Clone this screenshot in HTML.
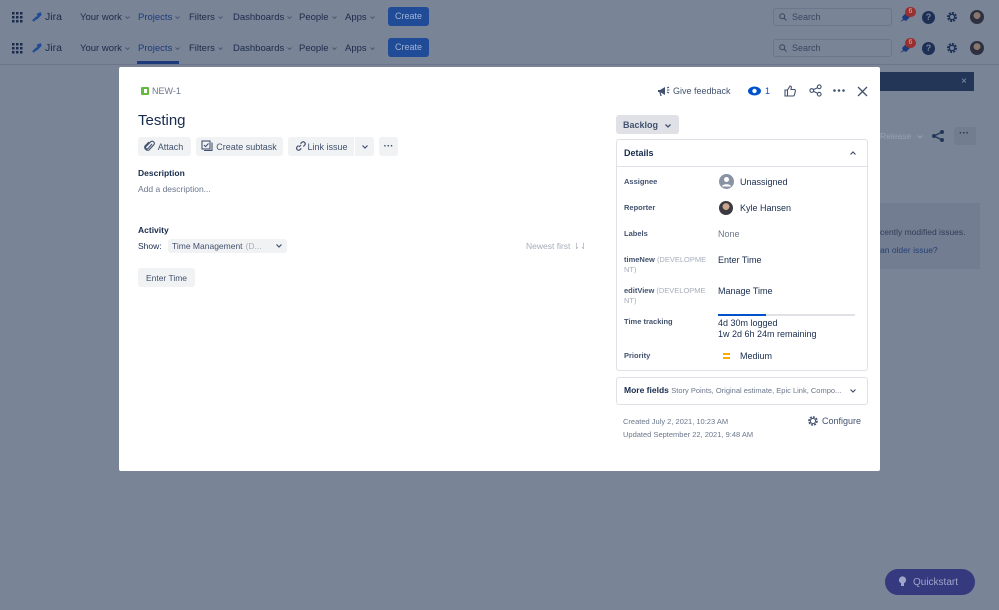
<!DOCTYPE html>
<html><head><meta charset="utf-8">
<style>
*{box-sizing:border-box;margin:0;padding:0}
body{width:999px;height:610px;overflow:hidden;background:#7a8497;font-family:"Liberation Sans",sans-serif;position:relative;color:#172b4d}
.a{position:absolute;white-space:nowrap}
.nav{font-size:9.5px;color:#1b2a4a}
.btn{position:absolute;background:#f1f2f4;border-radius:3px;font-size:9px;color:#42526e;display:flex;align-items:center;justify-content:center}
.lab{font-size:7.5px;color:#42526e;font-weight:bold}
.val{font-size:9px;color:#172b4d}
.gr{color:#a5adba;font-weight:normal}
.cv{display:inline-block;vertical-align:middle;margin-left:3px}
</style></head><body>

<div class="a" style="left:0;top:64px;width:999px;height:1px;background:#6d7689"></div>
<div id="rows"></div>
<div class="a" style="left:137px;top:61px;width:42px;height:3px;background:#1d3b7a"></div>

<!-- background board bits -->
<div class="a" style="left:875px;top:72px;width:99px;height:19px;background:#243657"></div>
<div class="a" style="left:961px;top:76px;color:#8b96ab;font-size:10px">×</div>
<div class="a" style="left:880px;top:131px;font-size:8.5px;color:#98a1b3">Release <svg class="cv" width="6" height="4" viewBox="0 0 6 4"><path d="M.5.5L3 3 5.5.5" stroke="#98a1b3" fill="none"/></svg></div>
<div class="a" style="left:954px;top:127px;width:22px;height:18px;background:#737d90;border-radius:3px"></div>
<div class="a" style="left:959px;top:128px;color:#243657;font-size:10px;font-weight:bold">···</div>
<svg class="a" style="left:931px;top:129px" width="14" height="14" viewBox="0 0 14 14"><circle cx="11" cy="3" r="2" fill="#243657"/><circle cx="3" cy="7" r="2" fill="#243657"/><circle cx="11" cy="11" r="2" fill="#243657"/><path d="M11 3L3 7L11 11" stroke="#243657" fill="none" stroke-width="1.3"/></svg>
<div class="a" style="left:880px;top:203px;width:100px;height:66px;background:#737d91"></div>
<div class="a" style="left:880px;top:227px;font-size:8.5px;color:#303d57">cently modified issues.</div>
<div class="a" style="left:880px;top:245px;font-size:8.5px;color:#253f73">an older issue?</div>

<!-- quickstart -->
<div class="a" style="left:885px;top:569px;width:90px;height:26px;border-radius:13px;background:#35397e;color:#9fa6c9;font-size:10px;display:flex;align-items:center;padding-left:28px">Quickstart</div>
<svg class="a" style="left:898px;top:576px" width="9" height="12" viewBox="0 0 9 12"><circle cx="4.5" cy="4" r="3.6" fill="#9fa6c9"/><rect x="3" y="7" width="3" height="3" fill="#9fa6c9"/></svg>

<!-- modal -->
<div class="a" style="left:119px;top:67px;width:761px;height:404px;background:#fff;border-radius:2px"></div>

<div class="a" style="left:141px;top:87px;width:8px;height:8px;background:#63ba3c;border-radius:1px"></div>
<div class="a" style="left:143.5px;top:89px;width:3px;height:4px;background:#fff"></div>
<div class="a" style="left:152px;top:86px;font-size:9px;color:#6b778c">NEW-1</div>
<div class="a" style="left:138px;top:112px;font-size:15px;color:#172b4d">Testing</div>

<div class="btn" style="left:138px;top:137px;width:53px;height:19px;padding-left:12px">Attach</div>
<svg class="a" style="left:144px;top:140px" width="11" height="12" viewBox="0 0 11 12"><path d="M8 4L4 8.5a1.3 1.3 0 0 1-2-2L7 1.5a2.2 2.2 0 0 1 3 3L5 10a3 3 0 0 1-4-4l4-4" stroke="#42526e" fill="none" stroke-width="1.1"/></svg>
<div class="btn" style="left:196px;top:137px;width:87px;height:19px;padding-left:14px">Create subtask</div>
<svg class="a" style="left:201px;top:140px" width="12" height="12" viewBox="0 0 12 12"><rect x="1" y="1" width="8" height="8" stroke="#42526e" fill="none" stroke-width="1.1"/><path d="M3 10.5h8v-8" stroke="#42526e" fill="none" stroke-width="1.1"/><path d="M3 5l1.6 1.6L7.5 3.5" stroke="#42526e" fill="none" stroke-width="1.1"/></svg>
<div class="btn" style="left:288px;top:137px;width:66px;height:19px;padding-left:13px;border-radius:3px 0 0 3px">Link issue</div>
<svg class="a" style="left:294px;top:140px" width="12" height="12" viewBox="0 0 12 12"><path d="M5 7L7 5M4.5 5.5L3 7a2 2 0 0 0 2.8 2.8L7.3 8.3M6.5 3.7L8 2.2A2 2 0 0 1 10.8 5L9.3 6.5" stroke="#42526e" fill="none" stroke-width="1.2"/></svg>
<div class="btn" style="left:355px;top:137px;width:19px;height:19px;border-radius:0 3px 3px 0"><svg width="6" height="4" viewBox="0 0 6 4"><path d="M.5.5L3 3 5.5.5" stroke="#42526e" fill="none" stroke-width="1.2"/></svg></div>
<div class="btn" style="left:379px;top:137px;width:19px;height:19px;font-weight:bold;font-size:10px">···</div>

<div class="a" style="left:138px;top:168px;font-size:8.5px;font-weight:bold;color:#172b4d">Description</div>
<div class="a" style="left:138px;top:184px;font-size:8.5px;color:#6b778c">Add a description...</div>
<div class="a" style="left:138px;top:225px;font-size:8.5px;font-weight:bold;color:#172b4d">Activity</div>
<div class="a" style="left:138px;top:241px;font-size:8.5px;color:#172b4d">Show:</div>
<div class="btn" style="left:168px;top:239px;width:119px;height:14px;justify-content:flex-start;padding-left:4px;font-size:8.5px;color:#42526e">Time Management <span style="color:#a5adba;margin-left:3px">(D...</span><svg style="margin-left:14px" width="6" height="4" viewBox="0 0 6 4"><path d="M.5.5L3 3 5.5.5" stroke="#42526e" fill="none" stroke-width="1.2"/></svg></div>
<div class="a" style="left:526px;top:241px;font-size:8.5px;color:#a5adba">Newest first ⇂⇃</div>
<div class="btn" style="left:138px;top:268px;width:57px;height:19px;font-size:8.5px">Enter Time</div>

<!-- right header -->
<svg class="a" style="left:657px;top:85px" width="13" height="12" viewBox="0 0 13 12"><path d="M1 5h2l5-3v8L3 7H1z" fill="#42526e"/><path d="M3 7l1 4" stroke="#42526e" stroke-width="1.3"/><path d="M10 3l2-1M10 5h2.5M10 7l2 1" stroke="#42526e" stroke-width="1"/></svg>
<div class="a" style="left:673px;top:86px;font-size:9px;color:#42526e">Give feedback</div>
<svg class="a" style="left:748px;top:86px" width="13" height="10" viewBox="0 0 13 10"><ellipse cx="6.5" cy="5" rx="6.5" ry="4.5" fill="#0052cc"/><circle cx="6.5" cy="5" r="2.2" fill="#fff"/></svg>
<div class="a" style="left:765px;top:86px;font-size:9px;color:#0052cc">1</div>
<svg class="a" style="left:784px;top:85px" width="12" height="12" viewBox="0 0 12 12"><path d="M1 5h2.5v6H1zM3.5 5L6 1c1 0 1.5.6 1.3 1.6L7 4.5h3.3c.8 0 1.3.7 1.1 1.4l-1 4.2c-.2.6-.7.9-1.3.9H3.5" stroke="#42526e" fill="none" stroke-width="1.1"/></svg>
<svg class="a" style="left:809px;top:84px" width="13" height="13" viewBox="0 0 14 14"><circle cx="11" cy="3" r="2" stroke="#42526e" fill="none" stroke-width="1.2"/><circle cx="3" cy="7" r="2" stroke="#42526e" fill="none" stroke-width="1.2"/><circle cx="11" cy="11" r="2" stroke="#42526e" fill="none" stroke-width="1.2"/><path d="M9.2 4L4.8 6M4.8 8l4.4 2" stroke="#42526e" stroke-width="1.2"/></svg>
<svg class="a" style="left:833px;top:89px" width="12" height="3" viewBox="0 0 12 3"><circle cx="1.5" cy="1.5" r="1.3" fill="#42526e"/><circle cx="6" cy="1.5" r="1.3" fill="#42526e"/><circle cx="10.5" cy="1.5" r="1.3" fill="#42526e"/></svg>
<svg class="a" style="left:857px;top:86px" width="11" height="11" viewBox="0 0 11 11"><path d="M1 1l9 9M10 1L1 10" stroke="#42526e" stroke-width="1.3"/></svg>

<div class="a" style="left:616px;top:115px;width:63px;height:19px;background:#dfe1e6;border-radius:3px;font-size:9px;font-weight:bold;color:#42526e;padding:5px 0 0 7px">Backlog<svg style="margin-left:7px;vertical-align:middle" width="6" height="4" viewBox="0 0 6 4"><path d="M.5.5L3 3 5.5.5" stroke="#42526e" fill="none" stroke-width="1.3"/></svg></div>

<div class="a" style="left:616px;top:139px;width:252px;height:232px;border:1px solid #dfe1e6;border-radius:3px"></div>
<div class="a" style="left:616px;top:166px;width:252px;height:1px;background:#dfe1e6"></div>
<div class="a" style="left:624px;top:148px;font-size:9px;font-weight:bold;color:#172b4d">Details</div>
<svg class="a" style="left:850px;top:151px" width="6" height="4" viewBox="0 0 6 4"><path d="M.5 3.5L3 1 5.5 3.5" stroke="#42526e" fill="none" stroke-width="1.2"/></svg>

<div class="a lab" style="left:624px;top:177px">Assignee</div>
<svg class="a" style="left:719px;top:174px" width="15" height="15" viewBox="0 0 15 15"><circle cx="7.5" cy="7.5" r="7.5" fill="#8993a4"/><circle cx="7.5" cy="5.5" r="2.5" fill="#fff"/><path d="M3 12.5c0-3 9-3 9 0z" fill="#fff"/></svg>
<div class="a val" style="left:740px;top:177px">Unassigned</div>
<div class="a lab" style="left:624px;top:203px">Reporter</div>
<div class="a" style="left:719px;top:201px;width:14px;height:14px;border-radius:50%;background:radial-gradient(circle at 50% 40%,#c9a58e 0 30%,#3a3a40 32%)"></div>
<div class="a val" style="left:740px;top:203px">Kyle Hansen</div>
<div class="a lab" style="left:624px;top:229px">Labels</div>
<div class="a val" style="left:718px;top:229px;color:#6b778c">None</div>
<div class="a lab" style="left:624px;top:255px;line-height:10px">timeNew <span class="gr">(DEVELOPME<br>NT)</span></div>
<div class="a val" style="left:718px;top:255px">Enter Time</div>
<div class="a lab" style="left:624px;top:286px;line-height:10px">editView <span class="gr">(DEVELOPME<br>NT)</span></div>
<div class="a val" style="left:718px;top:286px">Manage Time</div>
<div class="a lab" style="left:624px;top:317px">Time tracking</div>
<div class="a" style="left:718px;top:314px;width:137px;height:2px;background:#dfe1e6"></div>
<div class="a" style="left:718px;top:314px;width:48px;height:2px;background:#0052cc"></div>
<div class="a val" style="left:718px;top:318px;line-height:11px">4d 30m logged<br>1w 2d 6h 24m remaining</div>
<div class="a lab" style="left:624px;top:351px">Priority</div>
<div class="a" style="left:723px;top:353px;width:7px;height:1.5px;background:#ffab00"></div>
<div class="a" style="left:723px;top:357px;width:7px;height:1.5px;background:#ffab00"></div>
<div class="a val" style="left:740px;top:351px">Medium</div>

<div class="a" style="left:616px;top:377px;width:252px;height:28px;border:1px solid #dfe1e6;border-radius:3px"></div>
<div class="a" style="left:624px;top:385px;font-size:8.5px;font-weight:bold;color:#172b4d">More fields <span style="font-weight:normal;font-size:7.5px;color:#6b778c">Story Points, Original estimate, Epic Link, Compo...</span></div>
<svg class="a" style="left:850px;top:389px" width="6" height="4" viewBox="0 0 6 4"><path d="M.5.5L3 3 5.5.5" stroke="#42526e" fill="none" stroke-width="1.2"/></svg>

<div class="a" style="left:623px;top:415px;font-size:7.5px;color:#6b778c;line-height:13px">Created July 2, 2021, 10:23 AM<br>Updated September 22, 2021, 9:48 AM</div>
<svg class="a" style="left:807px;top:415px" width="12" height="12" viewBox="0 0 12 12"><circle cx="6" cy="6" r="4" stroke="#42526e" fill="none" stroke-width="1.6" stroke-dasharray="2 1.1"/><circle cx="6" cy="6" r="2.6" stroke="#42526e" fill="none" stroke-width="1"/></svg>
<div class="a" style="left:822px;top:416px;font-size:9px;color:#42526e">Configure</div>

<script>
var h='';
function cv(c){return '<svg class="cv" width="5" height="3" viewBox="0 0 5 3"><path d="M.5.5L2.5 2.5 4.5.5" stroke="'+c+'" fill="none" stroke-width="0.9"/></svg>';}
[17,48].forEach(function(y){
 var t=y-6;
 h+='<svg class="a" style="left:12px;top:'+(y-5)+'px" width="11" height="11" viewBox="0 0 11 11" fill="#1b2a4a">';
 for(var i=0;i<3;i++)for(var j=0;j<3;j++)h+='<rect x="'+(i*4)+'" y="'+(j*4)+'" width="2.5" height="2.5"/>';
 h+='</svg>';
 h+='<svg class="a" style="left:31px;top:'+(y-6)+'px" width="12" height="12" viewBox="0 0 12 12"><path d="M2 10L6 6M5 8L10 3M6 4l4-2" stroke="#1f4b97" stroke-width="2.2" fill="none"/></svg>';
 h+='<div class="a nav" style="left:45px;top:'+t+'px;font-size:10.5px;color:#1b2a4a">Jira</div>';
 var items=[[80,'Your work','#1b2a4a'],[138,'Projects','#1d3b7a'],[189,'Filters','#1b2a4a'],[233,'Dashboards','#1b2a4a'],[299,'People','#1b2a4a'],[345,'Apps','#1b2a4a']];
 items.forEach(function(it){h+='<div class="a nav" style="left:'+it[0]+'px;top:'+(t+1)+'px;color:'+it[2]+'">'+it[1]+cv('#4a5670')+'</div>';});
 h+='<div class="a" style="left:388px;top:'+(y-10)+'px;width:41px;height:19px;background:#1f4b97;border-radius:3px;color:#a3b3d4;font-size:9px;text-align:center;line-height:19px">Create</div>';
 h+='<div class="a" style="left:773px;top:'+(y-9)+'px;width:119px;height:18px;border:1px solid #6c7589;border-radius:3px;color:#3a4560;font-size:9px;padding:3px 0 0 18px">Search</div>';
 h+='<svg class="a" style="left:779px;top:'+(y-4)+'px" width="8" height="8" viewBox="0 0 8 8"><circle cx="3.2" cy="3.2" r="2.5" stroke="#3a4560" fill="none"/><path d="M5 5l2.5 2.5" stroke="#3a4560"/></svg>';
 h+='<svg class="a" style="left:899px;top:'+(y-5)+'px" width="12" height="11" viewBox="0 0 12 11"><path d="M1 10L4 7 3 5l4-4 4 4-4 4-2-1z" fill="#1d3b7a"/></svg>';
 h+='<div class="a" style="left:905px;top:'+(y-10)+'px;width:11px;height:10px;border-radius:5px;background:#9a2f2f;color:#c8b0b0;font-size:7px;text-align:center;line-height:10px">6</div>';
 h+='<div class="a" style="left:922px;top:'+(y-6)+'px;width:13px;height:13px;border-radius:50%;background:#1d2f55;color:#7a8497;font-size:9px;font-weight:bold;text-align:center;line-height:13px">?</div>';
 h+='<svg class="a" style="left:946px;top:'+(y-6)+'px" width="12" height="12" viewBox="0 0 12 12"><circle cx="6" cy="6" r="4" stroke="#1d2f55" fill="none" stroke-width="2" stroke-dasharray="2 1.1"/><circle cx="6" cy="6" r="2.6" stroke="#1d2f55" fill="none" stroke-width="1.2"/></svg>';
 h+='<div class="a" style="left:970px;top:'+(y-7)+'px;width:14px;height:14px;border-radius:50%;background:radial-gradient(circle at 50% 40%,#8a786e 0 30%,#2c3040 32%)"></div>';
});
document.getElementById('rows').innerHTML=h;
</script>
</body></html>
